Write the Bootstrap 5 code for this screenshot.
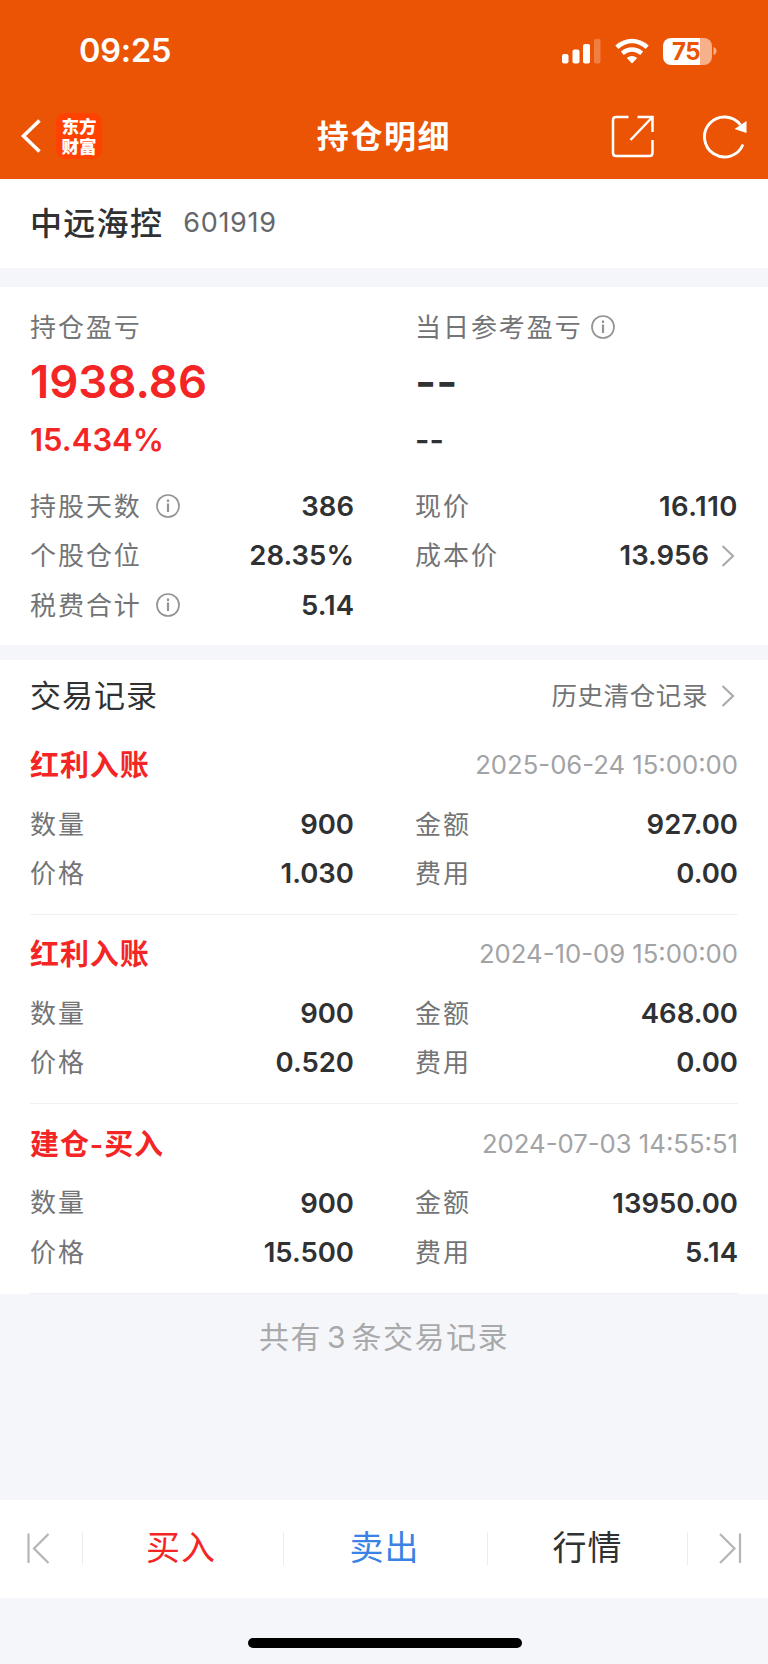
<!DOCTYPE html>
<html lang="zh-CN">
<head>
<meta charset="utf-8">
<meta name="viewport" content="width=device-width, initial-scale=1">
<title>持仓明细</title>
<link href="https://cdn.jsdelivr.net/npm/bootstrap@5.3.0/dist/css/bootstrap.min.css" rel="stylesheet">
<style>
body{font-family:Inter,"Noto Sans CJK SC",sans-serif;background:#f5f6f9;color:#303133;width:768px;height:1664px;overflow:hidden}
.top{height:179px;background:#ea5404}
.statusbar{height:102px;padding:0 51px 0 79px}
.clock{font-size:32.5px;font-weight:600;line-height:1;letter-spacing:-.2px;padding-top:1px}
.battery{width:49px;height:27px;border-radius:8px;background:linear-gradient(90deg,#fff 75%,#f6b08a 75%);color:#ea5404;font-size:24px;font-weight:700;line-height:27px;text-align:center;letter-spacing:-.6px;padding-right:3px}
.navrow{height:68px;padding:0 20px}
.logo{width:46px;height:46px;border-radius:9px;background:#ff4200;font:900 17.5px/20px "Noto Sans CJK SC",sans-serif;margin-left:15px;padding-top:3px;text-align:center}
.pagename{font-size:32px;font-weight:600;letter-spacing:1.6px;line-height:1;padding-top:1px}
.stock{height:89px;padding:0 30px}
.stock .nm{font-size:32px;font-weight:500;letter-spacing:1.3px}
.stock .code{font-size:27px;color:#66676a;letter-spacing:.7px;margin-left:20px}
.panel{padding:0 30px}
.two{display:grid;grid-template-columns:324px 323px;column-gap:61px}
.lbl{display:flex;align-items:center;font-size:26px;letter-spacing:1.95px;color:#737476;font-weight:400;white-space:nowrap}
.kv{height:49.3px;display:flex;align-items:center;justify-content:space-between;line-height:1;padding-top:2px}
.lbl svg{margin-top:-1px}
.val{font-size:27.5px;font-weight:600;color:#303133;letter-spacing:0}
.big{font-size:45.5px;font-weight:600;line-height:56px;height:56px;position:relative;top:3px}
.mid{font-size:31px;font-weight:600;line-height:60px;height:60px;position:relative;top:3px}
.up{color:#f42525}
.rec{border-bottom:1px solid #f0f1f3;height:189.4px;padding-top:14px}
.rec .ttl{font-size:29px;font-weight:600;letter-spacing:.9px;color:#f42525}
.rec .dt{font-size:25.7px;color:#a2a3a5;margin-top:-1px}
.rechead{height:72px}
.foot{font-size:30px;letter-spacing:1.5px;color:#a8a9ab;height:88px;margin-bottom:118px}
.actions{height:98px}
.actions svg{margin-top:-2px}
.actions .sep{width:1px;height:33px;background:#ebecee}
.actions .act{font-size:34px;letter-spacing:1px;line-height:1;text-align:center;text-decoration:none;padding-bottom:1px}
.homebar{width:274px;height:10px;border-radius:5px;background:#000;margin:40px auto 0;position:relative;left:1px}
</style>
</head>
<body>
<header class="top text-white">
  <div class="statusbar d-flex align-items-center justify-content-between">
    <span class="clock">09:25</span>
    <div class="d-flex align-items-center">
      <svg width="40" height="26" viewBox="0 0 40 26" fill="#fff"><rect x="1" y="16" width="6.500" height="9.500" rx="2"/><rect x="11.500" y="11.500" width="7" height="14" rx="2"/><rect x="22" y="6" width="7" height="19.500" rx="2"/><rect x="33" y="1" width="6.500" height="24.500" rx="2" opacity=".25"/></svg>
      <svg style="margin:0 14px" width="34" height="26" viewBox="0 0 34 26"><g fill="none" stroke="#fff" stroke-width="4.600"><path d="M1.800 9.200Q9 3 17 3T32.200 9.200"/><path d="M7.300 15.200Q12 11.500 17 11.500T26.700 15.200"/></g><path d="M11.800 20Q17 16 22.200 20L17 25.500Z" fill="#fff"/></svg>
      <span class="battery">75</span>
      <svg width="5" height="10" viewBox="0 0 5 10"><path d="M1.500 1Q4.500 2 4.500 5T1.500 9Z" fill="#f6b08a"/></svg>
    </div>
  </div>
  <nav class="navrow position-relative d-flex align-items-center">
    <svg width="21" height="36" viewBox="0 0 21 36" fill="none" stroke="#fff" stroke-width="3.600"><path d="M19.500 2.500 3.500 18 19.500 33.500"/></svg>
    <div class="logo">东方<br>财富</div>
    <h1 class="pagename m-0 position-absolute top-50 start-50 translate-middle text-nowrap">持仓明细</h1>
    <svg class="ms-auto" width="44" height="44" viewBox="0 0 44 44" fill="none" stroke="#fff" stroke-width="2.500"><path d="M18.500 3H6Q3 3 3 6V39Q3 42 6 42H39.500Q42.500 42 42.500 39V26M27.500 3H42.500V18M42 3.500 20.500 26"/></svg>
    <svg style="margin:0 0 0 48px" width="46" height="46" viewBox="0 0 46 46"><path d="M41 31.500A20 20 0 1 1 38.500 12" fill="none" stroke="#fff" stroke-width="2.900"/><path d="M32.500 16 44.500 8V20Z" fill="#fff"/></svg>
  </nav>
</header>
<section class="stock bg-white d-flex align-items-center"><span class="nm">中远海控</span><span class="code">601919</span></section>
<section class="panel bg-white" style="margin-top:19px;height:358px;padding-top:15px">
  <div class="two">
    <div>
      <div class="kv"><span class="lbl">持仓盈亏</span></div>
      <div class="big up">1938.86</div><div class="mid up">15.434%</div>
    </div>
    <div>
      <div class="kv"><span class="lbl">当日参考盈亏<svg width="24" height="24" viewBox="0 0 24 24" class="ms-2" fill="none" stroke="#929395"><circle cx="12" cy="12" r="11" stroke-width="1.700"/><path d="M12 9.500V18M12 5.500V8" stroke-width="2.200"/></svg></span></div>
      <div class="big">--</div><div class="mid">--</div>
    </div>
  </div>
  <div class="two" style="margin-top:14px">
    <div class="kv"><span class="lbl">持股天数<svg width="24" height="24" viewBox="0 0 24 24" style="margin-left:14px" fill="none" stroke="#929395"><circle cx="12" cy="12" r="11" stroke-width="1.700"/><path d="M12 9.500V18M12 5.500V8" stroke-width="2.200"/></svg></span><span class="val">386</span></div>
    <div class="kv"><span class="lbl">现价</span><span class="val" style="letter-spacing:.5px">16.110</span></div>
    <div class="kv"><span class="lbl">个股仓位</span><span class="val">28.35%</span></div>
    <div class="kv"><span class="lbl">成本价</span><span class="val d-flex align-items-center">13.956<svg width="14" height="22" viewBox="0 0 14 22" style="margin:0 3px 0 12px" fill="none" stroke="#aaabad" stroke-width="2.200"><path d="M1.500 1 12 11 1.500 21"/></svg></span></div>
    <div class="kv"><span class="lbl">税费合计<svg width="24" height="24" viewBox="0 0 24 24" style="margin-left:14px" fill="none" stroke="#929395"><circle cx="12" cy="12" r="11" stroke-width="1.700"/><path d="M12 9.500V18M12 5.500V8" stroke-width="2.200"/></svg></span><span class="val">5.14</span></div>
  </div>
</section>
<main class="panel bg-white" style="margin-top:15px">
  <div class="rechead d-flex align-items-center justify-content-between">
    <h2 class="m-0 fw-normal" style="font-size:31px;letter-spacing:1px">交易记录</h2>
    <span class="d-flex align-items-center" style="font-size:25.500px;letter-spacing:.6px;color:#737476;line-height:1">历史清仓记录<svg width="14" height="22" viewBox="0 0 14 22" style="margin:0 3px 0 13px" fill="none" stroke="#aaabad" stroke-width="2.200"><path d="M1.500 1 12 11 1.500 21"/></svg></span>
  </div>
  <article class="rec" style="height:183px;padding-top:8px">
    <div class="kv"><span class="ttl">红利入账</span><time class="dt">2025-06-24 15:00:00</time></div>
    <div class="two" style="margin-top:10px">
      <div class="kv"><span class="lbl">数量</span><span class="val">900</span></div><div class="kv"><span class="lbl">金额</span><span class="val">927.00</span></div>
      <div class="kv"><span class="lbl">价格</span><span class="val">1.030</span></div><div class="kv"><span class="lbl">费用</span><span class="val">0.00</span></div>
    </div>
  </article>
  <article class="rec">
    <div class="kv"><span class="ttl">红利入账</span><time class="dt">2024-10-09 15:00:00</time></div>
    <div class="two" style="margin-top:10px">
      <div class="kv"><span class="lbl">数量</span><span class="val">900</span></div><div class="kv"><span class="lbl">金额</span><span class="val">468.00</span></div>
      <div class="kv"><span class="lbl">价格</span><span class="val">0.520</span></div><div class="kv"><span class="lbl">费用</span><span class="val">0.00</span></div>
    </div>
  </article>
  <article class="rec">
    <div class="kv"><span class="ttl">建仓-买入</span><time class="dt">2024-07-03 14:55:51</time></div>
    <div class="two" style="margin-top:10px">
      <div class="kv"><span class="lbl">数量</span><span class="val">900</span></div><div class="kv"><span class="lbl">金额</span><span class="val">13950.00</span></div>
      <div class="kv"><span class="lbl">价格</span><span class="val">15.500</span></div><div class="kv"><span class="lbl">费用</span><span class="val">5.14</span></div>
    </div>
  </article>
</main>
<div class="foot d-flex align-items-center justify-content-center"><span>共有<span style="margin:0 4.500px 0 5px">3</span>条交易记录</span></div>
<nav class="actions bg-white d-flex align-items-center">
  <svg style="margin-left:26px;margin-right:32px" width="24" height="32" viewBox="0 0 24 32" fill="none" stroke="#b4b5b7" stroke-width="2.200"><path d="M2.500 1.500V31M22.500 2 8 16.500 22.500 31"/></svg>
  <i class="sep"></i><a class="act up" style="width:200px;padding-right:4px">买入</a>
  <i class="sep"></i><a class="act" style="width:203px;color:#3a82e4;padding-right:2px">卖出</a>
  <i class="sep"></i><a class="act" style="width:199px;color:#303133">行情</a>
  <i class="sep"></i>
  <svg style="margin-left:31px" width="24" height="32" viewBox="0 0 24 32" fill="none" stroke="#b4b5b7" stroke-width="2.200"><path d="M21 1.500V31M1 2 15.500 16.500 1 31"/></svg>
</nav>
<div class="homebar"></div>
<script src="https://cdn.jsdelivr.net/npm/bootstrap@5.3.0/dist/js/bootstrap.bundle.min.js"></script>
</body>
</html>
